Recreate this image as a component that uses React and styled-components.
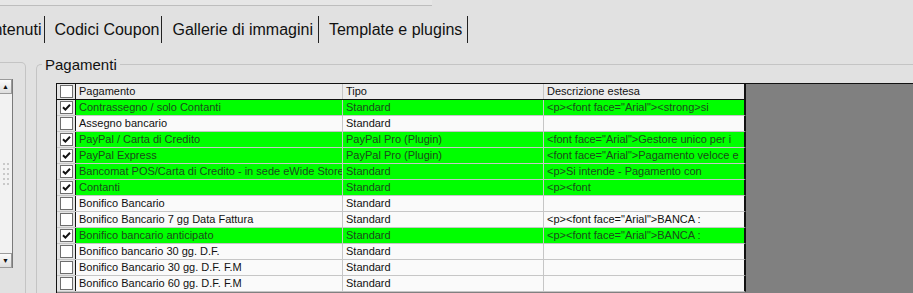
import React from 'react';
import styled, { createGlobalStyle } from 'styled-components';

const Global = createGlobalStyle`
  html, body {
    margin: 0;
    padding: 0;
    background: #e1e1e1;
    overflow: hidden;
  }
  body {
    width: 913px;
    height: 293px;
    font-family: 'Liberation Sans', Arial, sans-serif;
  }
`;

const TopStrip = styled.div`
  width: 432px;
  height: 5px;
  border-bottom: 1px solid #bdbdbd;
  background: #e6e6e6;
`;

const TabBar = styled.div`
  display: flex;
  align-items: flex-end;
  height: 37px;
  margin-left: -37px;
  overflow: hidden;
`;

const Tab = styled.div`
  font-size: 16px;
  color: #111;
  padding: 0 ${p => p.$pr}px 0 10px;
  height: 27px;
  line-height: 27px;
  border-right: 1px solid #222;
  white-space: nowrap;
`;

const Content = styled.div`
  display: flex;
  align-items: flex-start;
  margin-top: 13px;
`;

const LeftBox = styled.div`
  width: 25px;
  height: 224px;
  margin-top: 6px;
  border: 1px solid #c4c4c4;
  border-left: none;
  border-radius: 0 5px 5px 0;
  padding-top: 16px;
`;

const ListBox = styled.div`
  width: 12px;
  height: 189px;
  border-right: 1px solid #7a7a7a;
  display: flex;
  flex-direction: column;
  background: #f0f0f0;
`;

const ScrollBtn = styled.div`
  height: 15px;
  width: 12px;
  background: linear-gradient(#fbfbfb, #dedede);
  border: 1px solid #9a9a9a;
  border-left: none;
  box-sizing: border-box;
  display: flex;
  align-items: center;
  justify-content: center;
  font-size: 7px;
  color: #111;
`;

const Track = styled.div`
  flex: 1;
  display: flex;
  align-items: center;
  justify-content: center;
  background: #f2f2f2;
`;

const Grip = styled.div`
  display: grid;
  grid-template-columns: repeat(2, 2px);
  gap: 3px 2px;
  & > span {
    width: 2px;
    height: 2px;
    background: #c9c9c9;
  }
`;

const Group = styled.fieldset`
  flex: 1;
  margin: 0 0 0 10px;
  padding: 10px 0 0 5px;
  border: 1px solid #c4c4c4;
  border-right: none;
  border-radius: 5px 0 0 0;
  min-width: 0;
  height: 240px;
`;

const Legend = styled.legend`
  font-size: 15px;
  color: #111;
  padding: 0 3px;
`;

const Grid = styled.div`
  margin-left: 14px;
  border: 1px solid #111;
  border-right: none;
  background: #808080;
  height: 230px;
  display: flex;
  flex-direction: column;
  font-size: 11px;
`;

const Row = styled.div`
  display: flex;
  height: 15px;
  width: 687px;
  border-right: 2px solid #111;
  flex-shrink: 0;
  background: ${p => (p.$header ? '#ececec' : p.$on ? '#00ff00' : '#fafafa')};
  color: ${p => (p.$on ? '#1c4a1c' : '#111')};
  border-bottom: 1px solid ${p => (p.$header ? '#111' : '#c6c6c6')};
`;

const Cell = styled.div`
  width: ${p => p.$w}px;
  flex-shrink: 0;
  box-sizing: border-box;
  padding-left: 3px;
  line-height: 15px;
  border-right: 1px solid ${p => (p.$last ? 'transparent' : '#c6c6c6')};
  white-space: nowrap;
  overflow: hidden;
`;

const CheckCell = styled.div`
  width: 19px;
  flex-shrink: 0;
  box-sizing: border-box;
  background: #e4e4e4;
  border-right: 1px solid #111;
  display: flex;
  align-items: center;
  justify-content: center;
`;

const Box = styled.div`
  width: 13px;
  height: 13px;
  box-sizing: border-box;
  border: 1px solid #6e6e6e;
  background: #fff;
  display: flex;
  align-items: center;
  justify-content: center;
`;

const Check = ({ on }) => (
  <Box>
    {on && (
      <svg width="9" height="9" viewBox="0 0 9 9">
        <path d="M1 4.2 L3.4 6.6 L8 1.8" fill="none" stroke="#111" strokeWidth="2" />
      </svg>
    )}
  </Box>
);

const rows = [
  ['Contrassegno / solo Contanti', 'Standard', '<p><font face="Arial"><strong>si', true],
  ['Assegno bancario', 'Standard', '', false],
  ['PayPal / Carta di Credito', 'PayPal Pro (Plugin)', '<font face="Arial">Gestore unico per i', true],
  ['PayPal Express', 'PayPal Pro (Plugin)', '<font face="Arial">Pagamento veloce e', true],
  ['Bancomat POS/Carta di Credito - in sede eWide Store', 'Standard', '<p>Si intende - Pagamento con', true],
  ['Contanti', 'Standard', '<p><font', true],
  ['Bonifico Bancario', 'Standard', '', false],
  ['Bonifico Bancario 7 gg Data Fattura', 'Standard', '<p><font face="Arial">BANCA :', false],
  ['Bonifico bancario anticipato', 'Standard', '<p><font face="Arial">BANCA :', true],
  ['Bonifico bancario 30 gg. D.F.', 'Standard', '', false],
  ['Bonifico Bancario 30 gg. D.F. F.M', 'Standard', '', false],
  ['Bonifico Bancario 60 gg. D.F. F.M', 'Standard', '', false],
];

const App = () => (
  <>
    <Global />
    <TopStrip />
    <TabBar>
      <Tab $pr={2}>Contenuti</Tab>
      <Tab $pr={2}>Codici Coupon</Tab>
      <Tab $pr={5}>Gallerie di immagini</Tab>
      <Tab $pr={5}>Template e plugins</Tab>
    </TabBar>
    <Content>
      <LeftBox>
        <ListBox>
          <ScrollBtn>▲</ScrollBtn>
          <Track>
            <Grip>
              {Array.from({ length: 10 }).map((_, i) => <span key={i} />)}
            </Grip>
          </Track>
          <ScrollBtn>▼</ScrollBtn>
        </ListBox>
      </LeftBox>
      <Group>
        <Legend>Pagamenti</Legend>
        <Grid>
          <Row $header>
            <CheckCell><Check on={false} /></CheckCell>
            <Cell $w={267}>Pagamento</Cell>
            <Cell $w={201}>Tipo</Cell>
            <Cell $w={198} $last>Descrizione estesa</Cell>
          </Row>
          {rows.map(([name, tipo, desc, on]) => (
            <Row key={name} $on={on}>
              <CheckCell><Check on={on} /></CheckCell>
              <Cell $w={267}>{name}</Cell>
              <Cell $w={201}>{tipo}</Cell>
              <Cell $w={198} $last>{desc}</Cell>
            </Row>
          ))}
        </Grid>
      </Group>
    </Content>
  </>
);

export default App;
